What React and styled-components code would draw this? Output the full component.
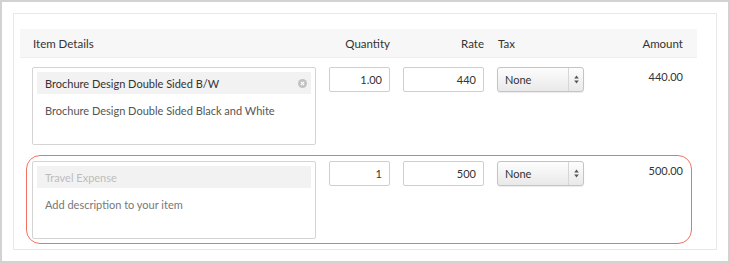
import React from 'react';
import styled, { createGlobalStyle } from 'styled-components';

const items = [
  {
    name: 'Brochure Design Double Sided B/W',
    description: 'Brochure Design Double Sided Black and White',
    quantity: '1.00',
    rate: '440',
    tax: 'None',
    amount: '440.00',
  },
  {
    name: '',
    namePlaceholder: 'Travel Expense',
    description: '',
    quantity: '1',
    rate: '500',
    tax: 'None',
    amount: '500.00',
    highlight: true,
  },
];

export default function App() {
  return (
    <>
      <GlobalStyle />
      <Frame>
        <Panel>
          <Header>
            <HeadCell>Item Details</HeadCell>
            <HeadCell $align="right">Quantity</HeadCell>
            <HeadCell $align="right">Rate</HeadCell>
            <HeadCell>Tax</HeadCell>
            <HeadCell $align="right">Amount</HeadCell>
          </Header>
          <Rows>
            {items.map((item, i) => (
              <Row key={i} $highlight={item.highlight}>
                <ItemBox>
                  <NameField $empty={!item.name}>
                    <span>{item.name || item.namePlaceholder}</span>
                    {item.name && <ClearIcon />}
                  </NameField>
                  <Description $empty={!item.description}>
                    {item.description || 'Add description to your item'}
                  </Description>
                </ItemBox>
                <NumberInput>{item.quantity}</NumberInput>
                <NumberInput>{item.rate}</NumberInput>
                <Select>
                  <SelectValue>{item.tax}</SelectValue>
                  <SelectArrows>
                    <svg width="5" height="9" viewBox="0 0 5 9">
                      <path d="M2.5 0.5 L4.8 3.6 L0.2 3.6 Z" fill="#555" />
                      <path d="M2.5 8.5 L4.8 5.4 L0.2 5.4 Z" fill="#555" />
                    </svg>
                  </SelectArrows>
                </Select>
                <Amount>{item.amount}</Amount>
              </Row>
            ))}
          </Rows>
        </Panel>
      </Frame>
    </>
  );
}

function ClearIcon() {
  return (
    <svg width="9" height="9" viewBox="0 0 9 9">
      <circle cx="4.5" cy="4.5" r="4.5" fill="#c2c2c2" />
      <path d="M2.9 2.9 L6.1 6.1 M6.1 2.9 L2.9 6.1" stroke="#fff" strokeWidth="1.2" />
    </svg>
  );
}

const GlobalStyle = createGlobalStyle`
  body {
    margin: 0;
    background: #fff;
    font-family: Lato, 'Open Sans', sans-serif;
    font-size: 11px;
    color: #333;
  }
`;

const Frame = styled.div`
  box-sizing: border-box;
  width: 730px;
  height: 263px;
  border: 2px solid #d2d2d2;
  padding: 11px;
  display: flex;
`;

const Panel = styled.div`
  flex: 1;
  border: 1px solid #e8e8e8;
  padding: 15px 19px 0 6px;
`;

const Header = styled.div`
  display: grid;
  grid-template-columns: 284px 61px 81px 87px 1fr;
  column-gap: 13px;
  align-items: center;
  height: 29px;
  padding: 0 14px 0 12px;
  background: #f7f7f7;
  border-bottom: 1px solid #efefef;
  box-sizing: border-box;
`;

const HeadCell = styled.div`
  font-size: 11.5px;
  color: #333;
  text-align: ${(props) => props.$align || 'left'};
  padding-left: ${(props) => (props.$align ? '0' : '1px')};
`;

const Rows = styled.div`
  display: flex;
  flex-direction: column;
  gap: 5px;
  padding: 3px 5px 0 6px;
`;

const Row = styled.div`
  display: grid;
  grid-template-columns: 284px 61px 81px 87px 1fr;
  column-gap: 13px;
  align-items: start;
  padding: 5px 8px 4px 5px;
  border: 1px solid ${(props) => (props.$highlight ? '#f4705f' : 'transparent')};
  border-radius: 14px;
`;

const ItemBox = styled.div`
  box-sizing: border-box;
  height: 78px;
  border: 1px solid #d4d4d4;
  border-radius: 2px;
  padding: 4px;
`;

const NameField = styled.div`
  display: flex;
  align-items: center;
  justify-content: space-between;
  height: 22px;
  padding: 0 8px;
  background: #f2f2f2;
  color: ${(props) => (props.$empty ? '#bdbdbd' : '#333')};

  svg {
    margin-right: -4px;
  }
`;

const Description = styled.div`
  margin-top: 8px;
  padding-left: 8px;
  line-height: 18px;
  color: ${(props) => (props.$empty ? '#777' : '#555')};
`;

const NumberInput = styled.div`
  box-sizing: border-box;
  height: 25px;
  border: 1px solid #cfcfcf;
  border-radius: 2px;
  padding: 0 7px;
  display: flex;
  align-items: center;
  justify-content: flex-end;
  color: #333;
`;

const Select = styled.div`
  box-sizing: border-box;
  height: 25px;
  display: flex;
  border: 1px solid #c4c4c4;
  border-radius: 3px;
  background: linear-gradient(#fdfdfd, #e9e9e9);
  box-shadow: 0 1px 1px rgba(0, 0, 0, 0.08);
`;

const SelectValue = styled.div`
  flex: 1;
  display: flex;
  align-items: center;
  padding-left: 7px;
  color: #333;
`;

const SelectArrows = styled.div`
  width: 14px;
  display: flex;
  align-items: center;
  justify-content: center;
  border-left: 1px solid #d6d6d6;
`;

const Amount = styled.div`
  padding-top: 3px;
  line-height: 14px;
  text-align: right;
  color: #333;
`;
